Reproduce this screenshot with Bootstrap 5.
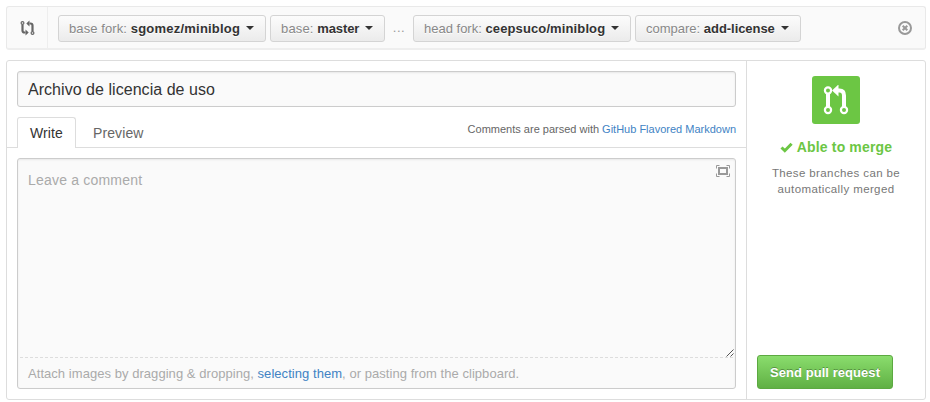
<!DOCTYPE html>
<html lang="en">
<head>
<meta charset="utf-8">
<meta name="viewport" content="width=device-width, initial-scale=1">
<title>Open a pull request</title>
<link href="https://cdn.jsdelivr.net/npm/bootstrap@5.3.0/dist/css/bootstrap.min.css" rel="stylesheet">
<style>
body{font-family:"Liberation Sans",Arial,sans-serif;font-size:13px;line-height:18px;color:#333;padding:6px 4px 0 6px;overflow:hidden}
a{color:#4183c4;text-decoration:none}
svg{display:block}
.range-bar{height:44px;background:#fafafa;border:1px solid #e9e9e9;border-bottom:2px solid #eee;border-radius:3px;margin-bottom:10px}
.range-icon{width:41px;border-right:1px solid #eee;color:#666}
.range-list{padding:1px 0 0 10px;gap:4px}
.btn-range{height:27px;padding:0 10px;font-size:13px;line-height:26px;color:#333;border:1px solid #d4d4d4;border-radius:3px;background:linear-gradient(#fcfcfc,#ebebeb);text-shadow:0 1px 0 rgba(255,255,255,.9);text-align:left;white-space:nowrap}
.btn-range span{color:#888}
.btn-range::after{margin-left:6px;vertical-align:3px;border-top-width:4px;border-left-width:4px;border-right-width:4px}
.range-base-fork{width:208px}
.range-base-fork span{letter-spacing:.1px}
.range-base-fork b{letter-spacing:.22px}
.range-base{width:115px}
.range-base span{letter-spacing:.15px}
.range-base b{letter-spacing:-.1px}
.range-head-fork{width:218px}
.range-head-fork b{letter-spacing:.12px}
.range-compare{width:166px}
.range-compare b{letter-spacing:-.05px}
.dots{width:28px;margin:0 -4px;color:#999;text-align:center;letter-spacing:.6px}
.close-range{color:#999;margin-right:13px}
.pr-panel{height:340px;border:1px solid #ddd;border-radius:3px;background:#fff}
.pr-main{width:740px;border-right:1px solid #ddd}
.title-input{margin:10px 10px 0;width:719px;height:36px;padding:1px 10px 0;font-size:16px;letter-spacing:.04px;color:#333;background:#fafafa;border:1px solid #ccc;border-radius:3px;box-shadow:inset 0 1px 2px rgba(0,0,0,.075)}
.write-tabs{height:31px;margin-top:10px;padding:0 10px;border-bottom:1px solid #ddd}
.write-tabs .nav-link{height:31px;padding:0 12px;font-size:14px;line-height:31px;letter-spacing:.1px;color:#666;border:1px solid transparent;border-bottom:0;border-radius:3px 3px 0 0;margin:0}
.write-tabs .nav-link.active{width:59px;color:#333;border-color:#ddd;background:#fff}
.write-tabs .preview{padding:0 16px}
.parsed{font-size:11px;line-height:14px;color:#666;padding-top:5px}
.comment-box{width:719px;height:231px;margin:10px;border:1px solid #ccc;border-radius:3px;background:#fafafa;box-shadow:inset 0 1px 2px rgba(0,0,0,.075)}
.comment-text{height:198px;padding:10px;font-size:14px;line-height:22px;letter-spacing:.2px;color:#333;background:transparent;border:0;border-radius:0;resize:none;overflow:hidden}
.comment-text::placeholder,.attach{color:#aaa}
.attach{margin:0 2px;height:31px;padding:0 8px;line-height:32px;letter-spacing:.05px;border-top:1px dashed #ddd}
.zen{position:absolute;right:5px;top:6px}
.grip{position:absolute;right:1px;top:190px}
.pr-side{padding:15px 10px 10px}
.merge-icon{width:48px;height:48px;border-radius:3px;background:#6cc644}
.able{margin-top:14px;font-size:14px;line-height:18px;letter-spacing:.15px;color:#6cc644;gap:4px}
.able-note{margin-top:9px;font-size:11.5px;line-height:16px;letter-spacing:.38px;color:#777}
.btn-send{height:34px;width:136px;padding:0;font-size:13px;line-height:34px;letter-spacing:.06px;font-weight:bold;color:#fff;border:1px solid #5ca941;border-radius:3px;background:linear-gradient(#8add6d,#60b044);text-shadow:0 -1px 0 rgba(0,0,0,.3)}
</style>
<script src="https://cdn.jsdelivr.net/npm/bootstrap@5.3.0/dist/js/bootstrap.bundle.min.js"></script>
</head>
<body>
<div class="range-bar d-flex align-items-stretch">
  <div class="range-icon d-flex align-items-center justify-content-center flex-shrink-0">
    <svg width="15" height="16" viewBox="0 0 14 16" fill="none" stroke="currentColor"><circle cx="2" cy="3" r="1.4" stroke-width="1.2"/><circle cx="12" cy="13" r="1.4" stroke-width="1.2"/><path d="M2 4.800V10.500q0 2 2 2H5M12 11.200V5.500q0-2-2-2H9" stroke-width="2.200"/><path d="M5 9.500v6l3.200-3zM9 .5v6L5.800 3.500z" fill="currentColor" stroke="none"/></svg>
  </div>
  <div class="range-list d-flex align-items-center flex-grow-1">
    <button class="btn btn-range range-base-fork dropdown-toggle" type="button"><span>base fork:</span> <b>sgomez/miniblog</b></button>
    <button class="btn btn-range range-base dropdown-toggle" type="button"><span>base:</span> <b>master</b></button>
    <div class="dots">...</div>
    <button class="btn btn-range range-head-fork dropdown-toggle" type="button"><span>head fork:</span> <b>ceepsuco/miniblog</b></button>
    <button class="btn btn-range range-compare dropdown-toggle" type="button"><span>compare:</span> <b>add-license</b></button>
    <a class="close-range ms-auto" href="#" aria-label="Close">
      <svg width="14" height="14" viewBox="0 0 14 14" fill="none" stroke="currentColor" stroke-width="2"><circle cx="7" cy="7" r="6"/><path d="M4.700 4.700l4.600 4.600M9.300 4.700L4.700 9.300"/></svg>
    </a>
  </div>
</div>
<div class="pr-panel d-flex">
  <div class="pr-main flex-shrink-0">
    <input class="title-input form-control" type="text" value="Archivo de licencia de uso" aria-label="Title">
    <div class="write-tabs d-flex">
      <ul class="nav flex-nowrap">
        <li class="nav-item"><a class="nav-link active" href="#">Write</a></li>
        <li class="nav-item"><a class="nav-link preview" href="#">Preview</a></li>
      </ul>
      <div class="parsed ms-auto">Comments are parsed with <a href="#">GitHub Flavored Markdown</a></div>
    </div>
    <div class="comment-box position-relative">
      <textarea class="comment-text w-100 d-block" placeholder="Leave a comment"></textarea>
      <div class="attach">Attach images by dragging &amp; dropping, <a href="#">selecting them</a>, or pasting from the clipboard.</div>
      <svg class="zen" width="14" height="12" viewBox="0 0 14 12" fill="none" stroke="#999"><path d="M.5 3.500V.5h3M10.500.5h3v3M13.500 8.500v3h-3M3.500 11.500h-3v-3"/><path d="M3 3h8v6H3z" stroke-width="2"/></svg>
      <svg class="grip" width="8" height="8" viewBox="0 0 8 8" stroke="#555" stroke-width="1"><path d="M.5 7.500l7-7M4.500 7.500l3-3"/></svg>
    </div>
  </div>
  <div class="pr-side d-flex flex-column flex-grow-1">
    <div class="merge-icon d-flex align-items-center justify-content-center align-self-center mx-auto">
      <svg width="26" height="30" viewBox="0 0 26 30" fill="none" stroke="#fff"><circle cx="5" cy="5.500" r="3.100" stroke-width="2.200"/><circle cx="5" cy="25" r="3.100" stroke-width="2.200"/><circle cx="21" cy="25" r="3.100" stroke-width="2.200"/><path d="M5 8.500v13.500M14 5.500h2.500q4.500 0 4.500 5V22" stroke-width="4"/><path d="M15.500-.5v12L9 5.500z" fill="#fff" stroke="none"/></svg>
    </div>
    <div class="able d-flex align-items-center justify-content-center fw-bold">
      <svg width="13" height="11" viewBox="0 0 13 11" fill="none" stroke="currentColor" stroke-width="3"><path d="M1.500 5.500l3.300 3.200 6.800-7"/></svg>
      Able to merge
    </div>
    <div class="able-note text-center">These branches can be<br>automatically merged</div>
    <button class="btn btn-send mt-auto" type="button">Send pull request</button>
  </div>
</div>
</body>
</html>
